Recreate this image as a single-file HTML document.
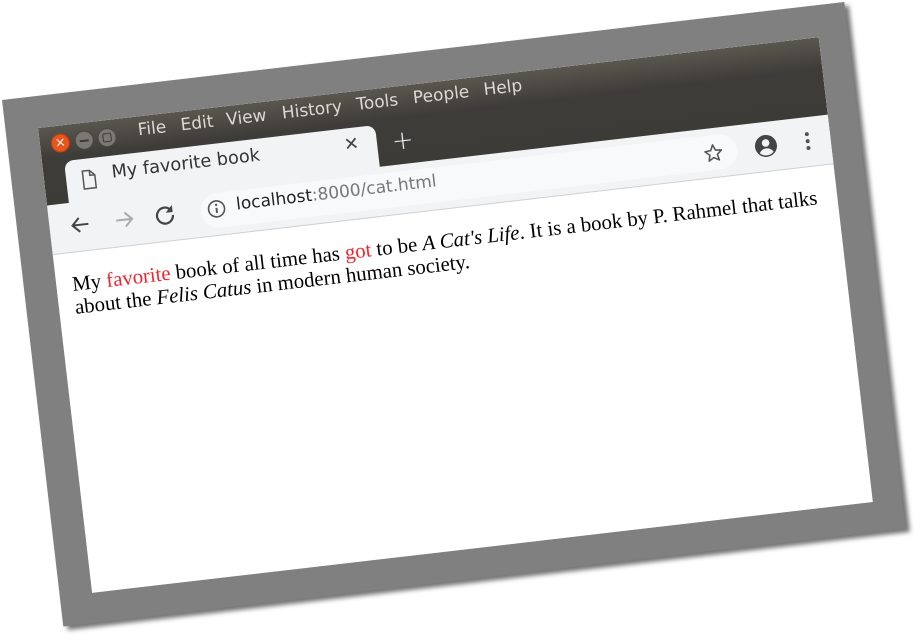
<!DOCTYPE html>
<html><head><meta charset="utf-8"><style>
html,body{margin:0;padding:0;width:922px;height:636px;background:#fff;overflow:hidden;position:relative}
.frame{position:absolute;left:2px;top:100px;width:848px;height:530px;background:#808080;transform-origin:0 0;transform:rotate(-6.64deg);box-shadow:4px 4px 5px rgba(0,0,0,.55)}
.win{position:absolute;left:38px;top:128px;width:786px;height:468px;transform-origin:0 0;transform:rotate(-6.64deg);background:#fff;overflow:hidden;font-family:"DejaVu Sans","Liberation Sans",sans-serif}
.title{position:absolute;left:0;top:0;width:786px;height:80px;background:linear-gradient(#5a5750,#3e3c38 40%,#3c3b37)}
.btn{position:absolute;top:8px;width:19px;height:19px;border-radius:50%;background:#7a7872;border:1px solid #4a4843;box-sizing:border-box}
.menu{position:absolute;top:4px;color:#dcdad5;font-size:17px}
.tab{position:absolute;left:22px;top:36px;width:313px;height:50px;background:#f1f3f4;border-radius:9px 9px 0 0}
.toolbar{position:absolute;left:0;top:78px;width:786px;height:49px;background:#f1f3f4;border-bottom:1px solid #cfd1d3}
.url{position:absolute;left:152px;top:7px;width:540px;height:35px;border-radius:18px;background:#f8f9fa}
.content{position:absolute;left:16px;top:149px;width:756px;font-family:"Liberation Serif",serif;font-size:20.8px;line-height:22.5px;color:#000}
.r{color:#f0242f}
</style></head><body>
<div class="frame"></div>
<div class="win">
 <div class="title"></div>
 <div class="btn" style="left:11px;background:#e9541f;border-color:#b83e12"></div>
 <div style="position:absolute;left:14px;top:8px;color:#fff;font-size:13px;line-height:19px;width:13px;text-align:center">×</div>
 <div class="btn" style="left:35px"></div>
 <div style="position:absolute;left:40px;top:17px;width:9px;height:2px;background:#3c3b37"></div>
 <div class="btn" style="left:58px"></div>
 <div style="position:absolute;left:63px;top:13px;width:7px;height:7px;border:1.5px solid #3c3b37;border-radius:2px"></div>
 <div class="menu" style="left:99px">File</div>
 <div class="menu" style="left:142px">Edit</div>
 <div class="menu" style="left:188px">View</div>
 <div class="menu" style="left:244px">History</div>
 <div class="menu" style="left:319px">Tools</div>
 <div class="menu" style="left:376px">People</div>
 <div class="menu" style="left:447px">Help</div>
 <div class="tab"></div>
 <svg style="position:absolute;left:37px;top:47px" width="16" height="20" viewBox="0 0 16 20"><path d="M2 1h7l5 5v13H2z M9 1v5h5" fill="none" stroke="#555" stroke-width="1.5"/></svg>
 <div style="position:absolute;left:68px;top:42px;font-size:17.8px;color:#333">My favorite book</div>
 <div style="position:absolute;left:302px;top:42px;font-size:18px;color:#444">✕</div>
 <div style="position:absolute;left:350px;top:40px;font-size:26px;color:#e8e8e8;font-weight:300">+</div>
 <div class="toolbar">
  <div class="url"></div>
  <svg style="position:absolute;left:20px;top:12px" width="22" height="22" viewBox="0 0 22 22"><path d="M19 11H4M10 4l-7 7 7 7" fill="none" stroke="#444" stroke-width="2"/></svg>
  <svg style="position:absolute;left:64px;top:12px" width="22" height="22" viewBox="0 0 22 22"><path d="M3 11h15M12 4l7 7-7 7" fill="none" stroke="#aaa" stroke-width="2"/></svg>
  <svg style="position:absolute;left:105px;top:12px" width="22" height="22" viewBox="0 0 22 22"><path d="M17.5 7A8 8 0 1 0 19 12" fill="none" stroke="#444" stroke-width="2.2"/><path d="M19 2v7h-7z" fill="#444"/></svg>
  <svg style="position:absolute;left:158px;top:13px" width="20" height="20" viewBox="0 0 20 20"><circle cx="10" cy="10" r="8" fill="none" stroke="#555" stroke-width="1.6"/><path d="M10 9v5" stroke="#555" stroke-width="2"/><circle cx="10" cy="6" r="1.2" fill="#555"/></svg>
  <div style="position:absolute;left:188px;top:11px;font-size:17px;color:#222">localhost<span style="color:#777">:8000/cat.html</span></div>
  <svg style="position:absolute;left:657px;top:14px" width="22" height="22" viewBox="0 0 24 24"><path d="M12 3l2.6 6 6.4.6-4.9 4.3 1.5 6.3L12 16.9 6.4 20.2l1.5-6.3L3 9.6 9.4 9z" fill="none" stroke="#555" stroke-width="1.7" stroke-linejoin="round"/></svg>
  <svg style="position:absolute;left:709px;top:12px" width="24" height="24" viewBox="0 0 24 24"><circle cx="12" cy="12" r="11" fill="#444"/><circle cx="12" cy="9" r="3.8" fill="#f1f3f4"/><path d="M5 18.5c2-3 4.5-4 7-4s5 1 7 4c-2 2-4.5 3-7 3s-5-1-7-3z" fill="#f1f3f4"/></svg>
  <svg style="position:absolute;left:759px;top:13px" width="8" height="22" viewBox="0 0 8 22"><circle cx="4" cy="4" r="2" fill="#555"/><circle cx="4" cy="11" r="2" fill="#555"/><circle cx="4" cy="18" r="2" fill="#555"/></svg>
 </div>
 <div class="content">My <span class="r">favorite</span> book of all time has <span class="r">got</span> to be <i>A Cat's Life</i>. It is a book by P. Rahmel that talks about the <i>Felis Catus</i> in modern human society.</div>
</div>
</body></html>
